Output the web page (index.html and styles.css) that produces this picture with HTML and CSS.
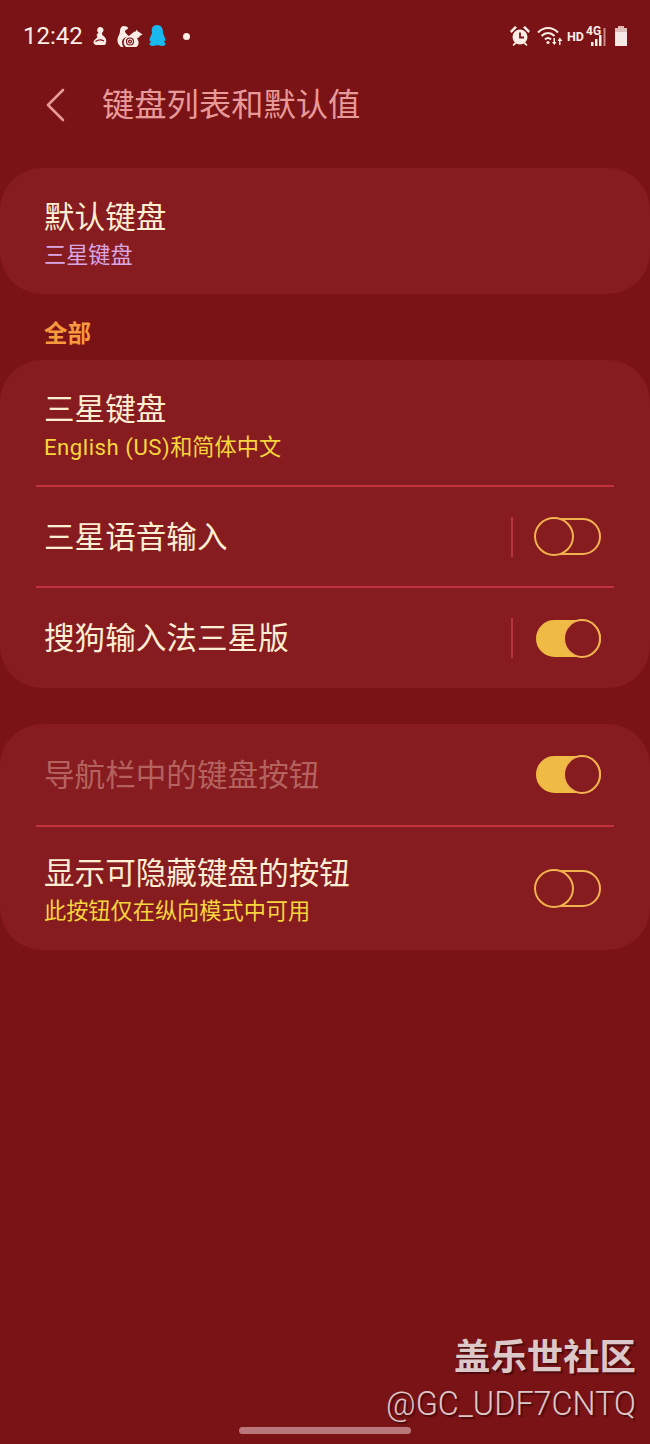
FILE: index.html
```html
<!DOCTYPE html>
<html lang="zh-CN">
<head>
    <meta charset="UTF-8">
    <meta name="viewport" content="width=device-width, initial-scale=1.0">
    <title>键盘列表和默认值</title>
    <link rel="stylesheet" href="styles.css">
</head>
<body>
    <div class="screen">
        <div class="status-bar">
            <div class="status-left">
                <span class="clock">12:42</span>
                <svg class="ic-figure" width="14" height="18" viewBox="0 0 14 18"><path fill="#fbeee6" d="M7 0c2 0 3.500 1.300 3.500 3 0 1-.5 2-1.300 2.500L9 7.500l2.500 2.500C13.500 12 14 15 12 18H2.500C.5 17 0 15 1 13.500L4.500 10 3.500 8l2-2.500C4.500 5 4 4 4.200 3 4.500 1.200 5.500 0 7 0z"/><path fill="none" stroke="#7a1316" stroke-width="1.400" d="M2.500 14.500c3-2 6-2 8.500-.5"/></svg>
                <svg class="ic-squirrel" width="26" height="21" viewBox="0 0 26 21"><path fill="#fbeee6" d="M6 0c3 0 5 .8 5 2.200S8.500 3.500 8 5c-.5 1.500 1.500 2.500 3 4.500.5.500.5 1 .5 1.200C8 10.500 5 13 5 16.500c0 1.500.5 3 1.500 4.500H4C1.500 19 0 16 .5 13 1 10 3 8 3 5.500 3 3 3.500 1 6 0z"/><path fill="#fbeee6" d="M12.500 9.500l3-2.500c1-1.200 2.500-1.800 3.500-1.500l.3-2 1.700 2 2.500 1.500 2 1.800-2.500 1-1 1.700-2 .5 1.500 3.500c.5 2-.2 4-2 5.500H9C6.500 19 6 16 7.500 13.500c1-2 3-3.500 5-4z"/><g fill="none" stroke="#7a1316" stroke-width="1.200"><circle cx="13" cy="15.500" r="1.400"/><circle cx="13" cy="15.500" r="3.500"/></g></svg>
                <svg class="ic-qq" width="18" height="22" viewBox="0 0 18 22"><path fill="#19b9f0" d="M9 0c4 0 6 3 6 7.500 0 2 2 4.500 2.500 7 .3 1.500-.5 2-1.500 1 0 1 .5 2 1.500 3 .5 1-1 2.500-3.500 2.500-2 0-3-.7-4.500-.7s-2.500.7-4.500.7c-2.500 0-4-1.500-3.500-2.500 1-1 1.500-2 1.500-3-1 1-1.800.5-1.500-1 .5-2.500 2.500-5 2.500-7C3 3 5 0 9 0z"/></svg>
                <span class="dot"></span>
            </div>
            <div class="status-right">
                <svg width="20" height="20" viewBox="0 0 20 20"><circle cx="10" cy="11" r="7.500" fill="#fbeee6"/><path fill="#fbeee6" d="M0 5l5-5 2 1.500L1.500 7zM20 5l-5-5-2 1.500L18.500 7zM4.500 16.500L2.500 19l1 1 3-2.500zM15.500 16.500l2 2.500-1 1-3-2.500z"/><path fill="none" stroke="#7a1316" stroke-width="1.800" d="M10 6.500v5h4"/></svg>
                <svg class="ic-wifi" width="26" height="20" viewBox="0 0 26 20"><g fill="none" stroke="#fbeee6" stroke-width="2"><path d="M1 6.500c6-6 14-6 20 0"/><path d="M4.500 10c4-4 9-4 13 0"/><path d="M8 13.500c2-2 4-2 6 0"/></g><circle cx="11" cy="16.500" r="1.600" fill="#fbeee6"/><path fill="#fbeee6" d="M16.500 12H18v4h1.500l-2.200 3-2.300-3h1.500zM22 19h1.500v-4H25.500l-2.700-3.500-2.300 3.500H22z"/></svg>
                <span class="hd">HD</span>
                <div class="signal">
                    <span class="net">4G</span>
                    <svg width="16" height="18" viewBox="0 0 16 18"><path fill="#fbeee6" d="M0 14h2.500v4H0zM4 11h2.500v7H4zM8 7h2.500v11H8z"/><path fill="#c98a8a" d="M12.500 0h2v18h-2z"/></svg>
                </div>
                <svg class="ic-battery" width="14" height="20" viewBox="0 0 14 20"><path fill="#e0b5b2" d="M4 0h6v2H4z"/><path fill="#f6e9e6" d="M1 2h12v18H1z"/><path fill="#dfc0bd" d="M1 2h12v4H1z"/></svg>
            </div>
        </div>

        <div class="app-bar">
            <svg class="back" width="22" height="36" viewBox="0 0 22 36"><path fill="none" stroke="#e89a9a" stroke-width="2.600" stroke-linecap="round" stroke-linejoin="round" d="M18 3L3 18l15 15"/></svg>
            <h1>键盘列表和默认值</h1>
        </div>

        <section class="card card-first">
            <div class="row row-text">
                <div class="row-main">
                    <div class="name">默认键盘</div>
                    <div class="sub sub-purple">三星键盘</div>
                </div>
            </div>
        </section>

        <div class="section-label">全部</div>

        <section class="card">
            <div class="row row-text">
                <div class="row-main">
                    <div class="name">三星键盘</div>
                    <div class="sub"><span class="latin">English (US)</span>和简体中文</div>
                </div>
            </div>
            <div class="divider"></div>
            <div class="row row-short">
                <div class="row-main"><div class="name">三星语音输入</div></div>
                <span class="vline"></span>
                <span class="switch"></span>
            </div>
            <div class="divider"></div>
            <div class="row">
                <div class="row-main"><div class="name">搜狗输入法三星版</div></div>
                <span class="vline"></span>
                <span class="switch on"></span>
            </div>
        </section>

        <section class="card card-last">
            <div class="row row-nav">
                <div class="row-main"><div class="name disabled">导航栏中的键盘按钮</div></div>
                <span class="switch on"></span>
            </div>
            <div class="divider"></div>
            <div class="row row-tall">
                <div class="row-main">
                    <div class="name">显示可隐藏键盘的按钮</div>
                    <div class="sub">此按钮仅在纵向模式中可用</div>
                </div>
                <span class="switch"></span>
            </div>
        </section>

        <div class="watermark">
            <div class="wm-title">盖乐世社区</div>
            <div class="wm-user">@GC_UDF7CNTQ</div>
        </div>
        <div class="home-bar"></div>
    </div>
</body>
</html>
```

FILE: styles.css
```css
*, *::after {
    box-sizing: border-box;
}
html, body {
    margin: 0;
    padding: 0;
}
body {
    font-family: Roboto, "Noto Sans CJK SC", sans-serif;
    background-color: #7a1316;
    color: #fbeed2;
}
.screen {
    position: relative;
    height: 1444px;
    overflow: hidden;
}
.status-bar {
    display: flex;
    justify-content: space-between;
    align-items: center;
    height: 24px;
    margin-top: 24px;
    padding: 0 22px 0 23px;
}
.status-left, .status-right {
    display: flex;
    align-items: center;
}
.clock {
    font-size: 24px;
    color: #fbeee6;
    margin-right: 10px;
}
.ic-squirrel {
    margin-left: 10px;
}
.ic-qq {
    margin-left: 5px;
}
.dot {
    width: 7px;
    height: 7px;
    border-radius: 50%;
    background-color: #fbeee6;
    margin-left: 17px;
}
.ic-wifi {
    margin-left: 7px;
}
.hd {
    font-weight: 700;
    font-size: 12.500px;
    color: #fbeee6;
    margin-left: 4px;
}
.signal {
    position: relative;
    width: 21px;
    height: 20px;
    margin-left: 2px;
    display: flex;
    justify-content: flex-end;
    align-items: flex-end;
}
.net {
    position: absolute;
    left: 0;
    top: -1px;
    font-weight: 700;
    font-size: 12px;
    line-height: 13px;
    color: #fbeee6;
}
.ic-battery {
    margin-left: 7px;
}
.app-bar {
    display: flex;
    align-items: center;
    height: 48px;
    margin-top: 33px;
    padding-left: 45px;
}
.back {
    flex: none;
}
.app-bar h1 {
    margin: 0 0 0 35px;
    font-size: 32.300px;
    font-weight: 400;
    color: #e89a9a;
    line-height: 48px;
}
.card {
    background-color: #861c20;
    border-radius: 42px;
}
.card-first {
    margin-top: 39px;
}
.card-first .row-text {
    height: 126px;
}
.section-label {
    height: 66px;
    padding: 23px 0 0 44px;
    font-size: 23.500px;
    line-height: 34px;
    font-weight: 700;
    color: #f79a3d;
}
.card-last {
    margin-top: 36px;
}
.row {
    display: flex;
    align-items: center;
    height: 100px;
    padding: 0 49px 0 44px;
}
.row-text {
    height: 125px;
}
.row-text .row-main {
    padding-top: 6px;
}
.row-short {
    height: 99px;
}
.row-nav {
    height: 101px;
}
.row-tall {
    height: 123px;
}
.row-main {
    flex: 1;
    padding-top: 2px;
}
.name {
    font-size: 30.600px;
    line-height: 42px;
}
.disabled {
    color: #b5625f;
}
.sub {
    font-size: 22.200px;
    line-height: 32px;
    color: #f6d63c;
}
.sub-purple {
    color: #d9a8e4;
}
.latin {
    letter-spacing: 0.500px;
}
.divider {
    height: 2px;
    margin: 0 36px;
    background-color: #c1323a;
}
.vline {
    width: 2px;
    height: 40px;
    background-color: #b8343c;
    margin-right: 23px;
}
.switch {
    position: relative;
    display: block;
    width: 65px;
    height: 37px;
    border: 2px solid #f2b24e;
    border-radius: 19px;
}
.switch::after {
    content: "";
    position: absolute;
    left: -4px;
    top: -3px;
    width: 40px;
    height: 39px;
    border: 2px solid #f2b24e;
    border-radius: 50%;
    background-color: #861c20;
}
.switch.on {
    background-color: #f0bb45;
    border-color: #f0bb45;
}
.switch.on::after {
    left: 25px;
    width: 38px;
}
.watermark {
    position: absolute;
    right: 14px;
    top: 1334px;
    text-align: right;
    color: #dcc8c8;
    text-shadow: 2px 2px 1px #4d0a0d;
}
.wm-title {
    font-size: 36.400px;
    font-weight: 700;
    line-height: 48px;
}
.wm-user {
    font-size: 32.400px;
    font-weight: 300;
    line-height: 44px;
}
.home-bar {
    position: absolute;
    left: 239px;
    top: 1427px;
    width: 172px;
    height: 7px;
    border-radius: 4px;
    background-color: #b9777a;
}
```
